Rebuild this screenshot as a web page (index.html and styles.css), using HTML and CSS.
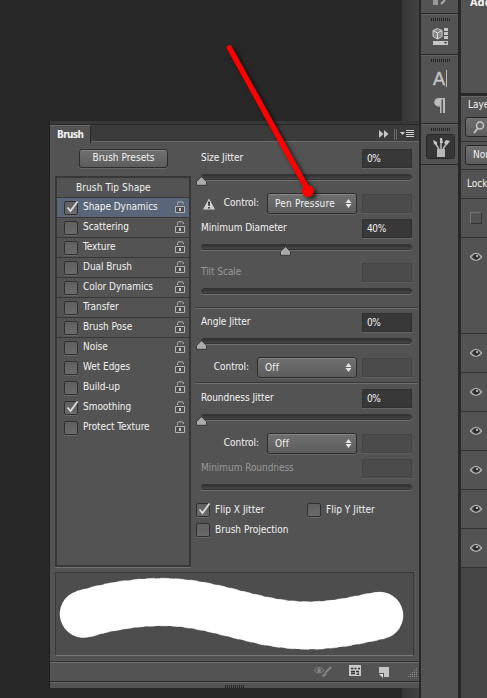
FILE: index.html
```html
<!DOCTYPE html>
<html lang="en">
<head>
<meta charset="utf-8">
<title>Brush</title>
<link rel="stylesheet" href="styles.css">
</head>
<body>
<svg class="defs" aria-hidden="true">
  <symbol id="lock" viewBox="0 0 11 13"><path d="M2.500 4V2.500Q2.500 .8 4 .8H6.500Q8.500 .8 8.500 3" fill="none" stroke="#b5b5b5"/><path d="M.5 5.500H9.500V11.500H.5z" fill="#4c4c4c" stroke="#b5b5b5"/><path d="M4 7h2v3H4z" fill="#c5c5c5"/></symbol>
  <symbol id="thumb" viewBox="0 0 11 10"><path d="M5.500 .7L10.500 5.500V9.300H.5V5.500z" fill="#aaa" stroke="#333" stroke-width=".9"/></symbol>
  <symbol id="updown" viewBox="0 0 7 9"><path d="M3.500 0L6.500 4H.5zM3.500 9L6.500 5H.5z" fill="#e5e5e5"/></symbol>
  <symbol id="tick" viewBox="0 0 16 16"><path d="M3.500 7.500L6.500 11L13.500 1.500" fill="none" stroke="#ddd" stroke-width="1.800"/></symbol>
  <symbol id="eye" viewBox="0 0 12 10"><path d="M.3 5Q6-2.300 11.700 5Q6 11.800.3 5z" fill="#484848" stroke="#b5b5b5" stroke-width="1.300"/><circle cx="6" cy="4.800" r="2.600" fill="#2c2c2c"/><circle cx="7" cy="4" r="1" fill="#ddd"/></symbol>
</svg>
<div class="app">
  <main class="stage">
    <div class="canvas-top"><i class="scroll"></i></div>
    <section class="panel">
      <header class="tabs"><b class="tab">Brush</b>
        <svg class="tabicons" width="41" height="12"><path d="M1 2l4.500 4L1 10zM6 2l4.500 4L6 10z" fill="#c5c5c5"/><path d="M16.500 1v11M18.500 1v11" stroke="#686868"/><path d="M22 4h5l-2.500 3z" fill="#ccc"/><path d="M28 2.500h8M28 4.500h8M28 6.500h8M28 8.500h8" stroke="#ccc"/></svg>
      </header>
      <div class="body">
        <div class="left">
          <button class="presets">Brush Presets</button>
          <ul class="list">
            <li class="tip">Brush Tip Shape</li>
            <li class="on"><i class="cb"><svg><use href="#tick"/></svg></i><span>Shape Dynamics</span><svg class="lock"><use href="#lock"/></svg></li>
            <li><i class="cb"></i><span>Scattering</span><svg class="lock"><use href="#lock"/></svg></li>
            <li><i class="cb"></i><span>Texture</span><svg class="lock"><use href="#lock"/></svg></li>
            <li><i class="cb"></i><span>Dual Brush</span><svg class="lock"><use href="#lock"/></svg></li>
            <li><i class="cb"></i><span>Color Dynamics</span><svg class="lock"><use href="#lock"/></svg></li>
            <li><i class="cb"></i><span>Transfer</span><svg class="lock"><use href="#lock"/></svg></li>
            <li><i class="cb"></i><span>Brush Pose</span><svg class="lock"><use href="#lock"/></svg></li>
            <li class="plain"><i class="cb"></i><span>Noise</span><svg class="lock"><use href="#lock"/></svg></li>
            <li class="plain"><i class="cb"></i><span>Wet Edges</span><svg class="lock"><use href="#lock"/></svg></li>
            <li class="plain"><i class="cb"></i><span>Build-up</span><svg class="lock"><use href="#lock"/></svg></li>
            <li class="plain"><i class="cb"><svg><use href="#tick"/></svg></i><span>Smoothing</span><svg class="lock"><use href="#lock"/></svg></li>
            <li class="plain"><i class="cb"></i><span>Protect Texture</span><svg class="lock"><use href="#lock"/></svg></li>
          </ul>
        </div>
        <div class="right">
          <div class="group g1">
            <div class="row"><span>Size Jitter</span><i class="field">0%</i></div>
            <div class="slider"><svg class="thumb"><use href="#thumb"/></svg></div>
            <div class="row control"><svg class="warn" width="12" height="12"><path d="M6 .5L12 11.500H0z" fill="#d0d0d0"/><path d="M6 3.500v4.300M6 9v1.500" stroke="#333" stroke-width="1.800"/></svg><span>Control:</span><div class="select">Pen Pressure<svg><use href="#updown"/></svg></div><i class="field off"></i></div>
            <div class="row"><span>Minimum Diameter</span><i class="field">40%</i></div>
            <div class="slider mid"><svg class="thumb"><use href="#thumb"/></svg></div>
            <div class="row dim"><span>Tilt Scale</span><i class="field off"></i></div>
            <div class="slider"></div>
          </div>
          <div class="group g2">
            <div class="row"><span>Angle Jitter</span><i class="field">0%</i></div>
            <div class="slider"><svg class="thumb"><use href="#thumb"/></svg></div>
            <div class="row control"><span>Control:</span><div class="select wide">Off<svg><use href="#updown"/></svg></div><i class="field off"></i></div>
          </div>
          <div class="group g3">
            <div class="row"><span>Roundness Jitter</span><i class="field">0%</i></div>
            <div class="slider"><svg class="thumb"><use href="#thumb"/></svg></div>
            <div class="row control"><span>Control:</span><div class="select">Off<svg><use href="#updown"/></svg></div><i class="field off"></i></div>
            <div class="row dim"><span>Minimum Roundness</span><i class="field off"></i></div>
            <div class="slider"></div>
          </div>
          <div class="checks">
            <label><i class="cb"><svg><use href="#tick"/></svg></i>Flip X Jitter</label><label><i class="cb"></i>Flip Y Jitter</label>
            <label><i class="cb"></i>Brush Projection</label>
          </div>
        </div>
      </div>
      <div class="preview"><svg width="357" height="82" viewBox="56 573 357 82"><path d="M83.500 614C110 606 137 602 162 602C215 602 255 625.500 308 625.500C335 625.500 357 620 379.500 615.500" fill="none" stroke="#fff" stroke-width="47.500" stroke-linecap="round"/><path d="M83.500 614C110 606 137 602 162 602C215 602 255 625.500 308 625.500C335 625.500 357 620 379.500 615.500" fill="none" stroke="#fff" stroke-opacity=".6" stroke-width="48.500" stroke-dasharray="8 5"/></svg></div>
      <footer class="foot">
        <svg width="106" height="17" viewBox="313 663 106 17">
          <path d="M314 670.500q5-6 10 0q-5 5-10 0z" fill="none" stroke="#858585"/><circle cx="319" cy="670.500" r="2" fill="#858585"/><path d="M331 667l-6 6" stroke="#858585" stroke-width="2"/><path d="M321 676q2 0 3-3l3 1q-2 4-6 2z" fill="#858585"/>
          <path d="M349 665h12v11h-12z" fill="#c9c9c9"/><path d="M351 668.500h2.500M354.500 668.500h2M358 668.500h2M351 671.500h4M356 671.500h3M351 673.500h4" stroke="#333" stroke-width="1.300"/><path d="M356 675l3-3v3z" fill="#444"/>
          <path d="M379 667h10v10h-5v-4h-5z" fill="#c5c5c5"/><path d="M379 674h4v4z" fill="#ddd"/>
          <path d="M416.500 668v10M414.500 670v8M412.500 672v6M410.500 674v4M408.500 676v2" stroke="#8a8a8a" stroke-dasharray="1 1"/>
        </svg>
      </footer>
      <div class="resize"><i class="grip"></i></div>
    </section>
    <div class="canvas-bottom"><i class="scroll"></i></div>
    <svg class="pointer" width="120" height="170" viewBox="215 35 120 170"><path d="M229.500 48L308 190" stroke="red" stroke-width="5.500" stroke-linecap="round"/><circle cx="308" cy="191" r="6" fill="red"/></svg>
  </main>
  <nav class="strip">
    <div class="cell c0"><svg width="16" height="6"><path d="M1 0h5v5H1z" fill="#999"/><path d="M9 4l4-4" stroke="#aaa" stroke-width="2"/></svg></div>
    <div class="cell c1"><i class="grip"></i><svg width="17" height="19" viewBox="432 27 17 19"><path d="M437.500 28.500l4.500 2v6l-4.500 2.500l-4.500-2.500v-6z" fill="#888" stroke="#ccc"/><path d="M433 30.500l4.500 2.500l4.500-2.500M437.500 33v6" fill="none" stroke="#ddd"/><path d="M444 28h4v3h-4zM444 32h4v3h-4zM444 36h4v3h-4zM433 41h15v4h-15z" fill="#c5c5c5"/><path d="M444 42h3l-1.500 2z" fill="#333"/></svg></div>
    <div class="cell c2"><i class="grip"></i><div class="letter">A<i></i></div><svg width="12" height="15"><path d="M11 0v15H9V1.500H7.500V15H6V8.500C-1.500 9-1.500 0 5 0z" fill="#bbb"/></svg></div>
    <div class="cell c3"><i class="grip"></i><div class="active"><svg width="18" height="20" viewBox="431 137 18 20"><path d="M436 149h8v8h-8z" fill="#b8b8b8"/><path d="M438 149l-4-6M440 149v-7M442 149l4-6" stroke="#bbb" stroke-width="1.500"/><path d="M432 140l4 2v3l-3-1zM439 138l2 0 1 5h-3zM443 143l2-3 4 1-3 4z" fill="#c5c5c5"/></svg></div></div>
  </nav>
  <aside class="layers">
    <div class="adj"><b>Add</b></div>
    <div class="ltab">Laye</div>
    <div class="lrow"><div class="lbtn"><svg width="12" height="13"><circle cx="7" cy="4.500" r="3.500" fill="none" stroke="#c5c5c5" stroke-width="1.500"/><path d="M5 7L1 12" stroke="#c5c5c5" stroke-width="2"/></svg></div></div>
    <div class="lrow"><div class="lbtn">Nor</div></div>
    <div class="lrow lockrow">Lock</div>
    <div class="layer l0"><i class="box"></i></div>
    <div class="layer l1"><svg class="eye"><use href="#eye"/></svg></div>
    <div class="layer"><svg class="eye"><use href="#eye"/></svg></div>
    <div class="layer"><svg class="eye"><use href="#eye"/></svg></div>
    <div class="layer"><svg class="eye"><use href="#eye"/></svg></div>
    <div class="layer"><svg class="eye"><use href="#eye"/></svg></div>
    <div class="layer"><svg class="eye"><use href="#eye"/></svg></div>
    <div class="layer"><svg class="eye"><use href="#eye"/></svg></div>
  </aside>
</div>
</body>
</html>
```
FILE: styles.css
```css
* { box-sizing: border-box; }
body { margin: 0; background: #282828; color: #f2f2f2; font: 10px/12px "DejaVu Sans Condensed", "DejaVu Sans", sans-serif; font-stretch: condensed; overflow: hidden; letter-spacing: -0.05px; }
i { font-style: normal; }
svg { display: block; flex: none; }
.defs { position: absolute; width: 0; height: 0; }
.app { display: grid; grid-template-columns: 421px 37px 29px; height: 698px; overflow: hidden; }
.stage { position: relative; display: flex; flex-direction: column; border-right: 2px solid #282828; }
.canvas-top { height: 121px; display: flex; justify-content: flex-end; flex: none; }
.canvas-bottom { flex: 1; display: flex; justify-content: flex-end; }
.scroll { width: 17px; background: linear-gradient(90deg, #373737, #424242); }
.panel { margin-left: 50px; height: 567px; background: #535353; border-top: 3px solid #383838; box-shadow: -1px 0 #202020; display: flex; flex-direction: column; }
.tabs { height: 18px; flex: none; display: flex; justify-content: space-between; background: #3b3b3b; border-top: 1px solid #282828; border-bottom: 1px solid #686868; }
.tab { width: 41px; height: 18px; padding: 3px 0 0 7px; background: #535353; border-right: 1px solid #282828; border-top: 1px solid #686868; letter-spacing: -.65px; }
.tabicons { margin: 3px 0 0; }
.body { display: flex; height: 425px; }
.left { width: 145px; padding: 7px 0 0 5px; }
.presets { display: block; width: 89px; height: 19px; margin: 0 0 8px 24px; padding: 0 0 1px; font: inherit; letter-spacing: .05px; color: inherit; border: 1px solid #2d2d2d; border-radius: 3px; background: linear-gradient(#707070, #5d5d5d); box-shadow: 0 1px #666, inset 0 1px #858585; }
.list { list-style: none; margin: 0; padding: 0; width: 136px; height: 391px; border: 2px solid #383838; box-shadow: 0 1px #707070; }
.list li { height: 20px; display: flex; align-items: center; border-bottom: 1px solid #383838; padding: 0 3px 0 7px; }
.list li.plain { border-color: transparent; }
.list li.tip { padding-left: 19px; letter-spacing: .1px; }
.list li.on { background: #596578; }
.list span { flex: 1; margin: -1px 0 0 5px; }
.lock { width: 11px; height: 13px; }
.cb { width: 14px; height: 14px; flex: none; border: 1px solid #303030; border-radius: 2px; background: linear-gradient(#606060, #6a6a6a); display: block; box-shadow: 0 1px #686868; }
.cb svg { width: 16px; height: 16px; margin: -2px 0 0 -1px; overflow: visible; }
.right { width: 224px; padding: 7px 0 0; }
.group { width: 223px; padding: 0 6px; }
.g1 { height: 158px; }
.g2, .g3 { border-top: 1px solid #383838; box-shadow: inset 0 1px #707070; padding-top: 6px; }
.g2 { height: 75px; padding-top: 5px; }
.g3 { height: 121px; }
.row { display: flex; justify-content: space-between; align-items: center; height: 19px; }
.row > span { margin-top: -1px; }
.field { width: 50px; height: 19px; padding: 3px 0 0 4px; background: #383838; border: 1px solid #303030; box-shadow: 0 1px #666; letter-spacing: -.4px; }
.field.off { background: #4b4b4b; border-color: #444; box-shadow: 0 1px #606060; }
.slider { height: 6px; margin: 6px 0 14px; background: linear-gradient(#303030, #484848); border: 1px solid #333; border-radius: 3px; box-shadow: 0 1px #707070; }
.thumb { width: 11px; height: 10px; margin: 1px 0 0 -6px; }
.slider.mid { margin-bottom: 13px; }
.mid .thumb { margin-left: 78px; }
.control { justify-content: flex-end; margin-bottom: 6px; height: 19px; }
.warn { margin-right: 9px; }
.select { width: 90px; height: 21px; margin: 0 5px 0 8px; padding: 0 4px 0 7px; display: flex; align-items: center; justify-content: space-between; border: 1px solid #2d2d2d; border-radius: 3px; background: linear-gradient(#707070, #5d5d5d); box-shadow: 0 1px #666, inset 0 1px #858585; letter-spacing: .2px; }
.select.wide { width: 100px; }
.select svg { width: 7px; height: 9px; }
.dim { color: #999; }
.checks { display: grid; grid-template-columns: 111px 112px; grid-auto-rows: 20px; margin-top: -3px; padding-left: 1px; letter-spacing: .02px; }
.checks label { display: flex; align-items: center; gap: 5px; }
.preview { width: 359px; height: 84px; flex: none; margin: 5px 0 0 5px; border: 1px solid #383838; border-bottom-color: #777; background: #4d4d4d; }
.foot { height: 20px; flex: none; margin-top: 5px; border-top: 1px solid #303030; box-shadow: inset 0 1px #707070; display: flex; justify-content: flex-end; padding-top: 1px; }
.resize { flex: 1; border-top: 1px solid #282828; display: flex; justify-content: center; padding-top: 3px; box-shadow: inset 0 1px #686868; }
.grip { display: block; width: 19px; height: 3px; background: repeating-linear-gradient(90deg, #262626 0 1px, #535353 1px 2px); }
.pointer { position: absolute; left: 215px; top: 35px; filter: drop-shadow(3px 3px 2px rgba(0,0,0,.65)); }
.strip { background: #535353; }
.cell { display: flex; flex-direction: column; align-items: center; border-bottom: 1px solid #282828; box-shadow: inset 0 1px #626262; padding: 4px 0 0 1px; }
.c0 { height: 14px; padding: 0; box-shadow: none; }
.c1 { height: 41px; }
.c1 svg { margin-top: 6px; }
.c2 { height: 69px; }
.c2 svg { margin-top: 11px; }
.c3 { height: 41px; }
.letter { display: flex; gap: 1px; height: 17px; margin-top: 8px; font: 18px/18px "Liberation Sans", sans-serif; color: #c5c5c5; -webkit-text-stroke: .4px #c5c5c5; }
.letter i { width: 1px; background: #bbb; }
.active { width: 29px; height: 25px; margin-top: 3px; padding: 2px 5px; background: #373737; border: 1px solid #282828; border-radius: 3px; }
.layers { width: 29px; border-left: 3px solid #282828; background: #464646; overflow: hidden; }
.layers > div { background: #535353; border-bottom: 1px solid #333; }
.adj { height: 96px; padding: 0 0 0 9px; font-size: 11px; line-height: 5px; }
.layers > .adj { border-bottom: 3px solid #282828; }
.ltab { padding: 3px 0 0 7px; box-shadow: inset 0 1px #686868; }
.layers > .ltab { border: 0; height: 18px; }
.lrow { height: 28px; padding: 3px 0 0 4px; }
.lbtn { width: 50px; height: 20px; padding: 3px 7px; border: 1px solid #282828; border-radius: 3px; background: linear-gradient(#707070, #5d5d5d); }
.lockrow { padding: 8px 0 0 6px; height: 29px; }
.layer { height: 39px; display: flex; align-items: center; padding-left: 9px; }
.l1 { height: 96px; align-items: flex-start; padding-top: 14px; }
.box { width: 12px; height: 12px; border: 1px solid #777; border-right-color: #333; border-bottom-color: #333; }
.eye { width: 12px; height: 10px; }
```
